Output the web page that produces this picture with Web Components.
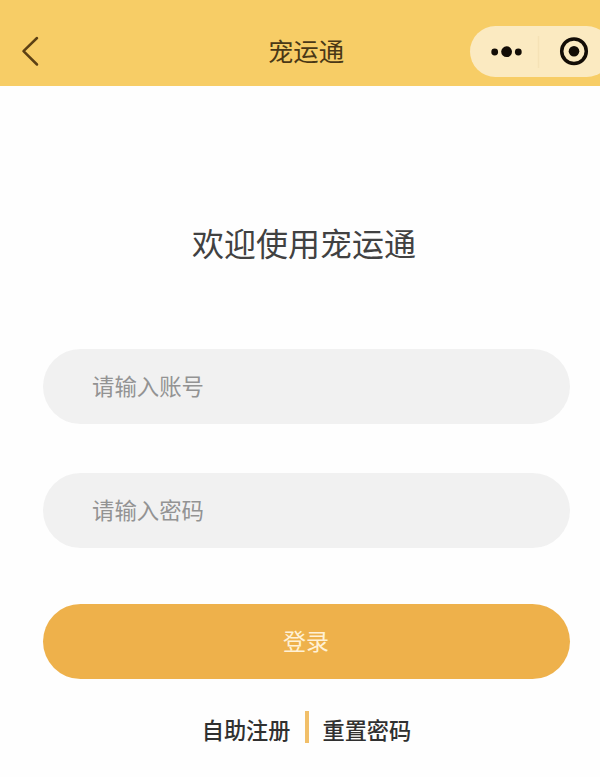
<!DOCTYPE html>
<html lang="zh-CN">
<head>
<meta charset="UTF-8">
<meta name="viewport" content="width=device-width, initial-scale=1">
<title>宠运通</title>
<style>
  body {
    margin: 0;
    background: #fefefe;
    font-family: "Noto Sans CJK SC", sans-serif;
    overflow: hidden;
  }
</style>
</head>
<body>
<login-page></login-page>

<script>
class CapsuleMenu extends HTMLElement {
  constructor() {
    super();
    this.attachShadow({ mode: "open" });
  }

  static get styles() {
    return /* css */`
      :host {
        display: block;
        width: 142px;
        height: 51px;
        border-radius: 26px;
        background: #fbeac1;
      }

      svg {
        display: block;
      }
    `;
  }

  connectedCallback() {
    this.shadowRoot.innerHTML = /* html */`
    <style>${CapsuleMenu.styles}</style>
    <svg width="142" height="51" viewBox="0 0 142 51" fill="#130d06">
      <circle cx="24.7" cy="26" r="3.4" />
      <circle cx="36.6" cy="25.7" r="5.4" />
      <circle cx="48.3" cy="26" r="3.4" />
      <path d="M68.5 10v32" stroke="#f5e2b6" stroke-width="1.5" />
      <circle cx="104" cy="25.3" r="12.3" fill="none" stroke="#130d06" stroke-width="3.5" />
      <circle cx="104" cy="25.3" r="5.3" />
    </svg>`;
  }
}

class NavBar extends HTMLElement {
  constructor() {
    super();
    this.attachShadow({ mode: "open" });
  }

  static get styles() {
    return /* css */`
      :host {
        display: grid;
        grid-template-columns: 142px 1fr 130px;
        align-items: center;
        box-sizing: border-box;
        height: 86px;
        padding-top: 17px;
        background: #f7cd66;
      }

      .back {
        display: block;
        margin-left: 17px;
        margin-bottom: 1px;
      }

      .title {
        margin-bottom: 3px;
        font-size: 25.4px;
        line-height: 36px;
        color: #4a3816;
        text-align: center;
      }
    `;
  }

  connectedCallback() {
    this.shadowRoot.innerHTML = /* html */`
    <style>${NavBar.styles}</style>
    <svg class="back" width="24" height="34" viewBox="0 0 24 34" fill="none">
      <path d="M20 4 6.500 17.200 20 30.500" stroke="#5c4014" stroke-width="2.500" stroke-linecap="round" stroke-linejoin="round" />
    </svg>
    <div class="title"><slot></slot></div>
    <capsule-menu></capsule-menu>`;
  }
}

class TextField extends HTMLElement {
  constructor() {
    super();
    this.attachShadow({ mode: "open" });
  }

  static get styles() {
    return /* css */`
      :host {
        display: flex;
        align-items: center;
        box-sizing: border-box;
        height: 75px;
        padding: 0 49px 3px;
        border-radius: 38px;
        background: #f1f1f1;
        font-size: 22.4px;
        line-height: 32px;
        color: #939393;
      }
    `;
  }

  connectedCallback() {
    this.shadowRoot.innerHTML = /* html */`
    <style>${TextField.styles}</style>
    <span><slot></slot></span>`;
  }
}

class SubmitButton extends HTMLElement {
  constructor() {
    super();
    this.attachShadow({ mode: "open" });
  }

  static get styles() {
    return /* css */`
      :host {
        display: block;
      }

      button {
        display: block;
        width: 100%;
        height: 75px;
        padding: 0 1px 4px 0;
        border: 0;
        border-radius: 38px;
        background: #eeb14b;
        font-family: inherit;
        font-size: 23px;
        line-height: 34px;
        color: #fff1d6;
      }
    `;
  }

  connectedCallback() {
    this.shadowRoot.innerHTML = /* html */`
    <style>${SubmitButton.styles}</style>
    <button type="button"><slot></slot></button>`;
  }
}

class AccountLinks extends HTMLElement {
  constructor() {
    super();
    this.attachShadow({ mode: "open" });
  }

  static get styles() {
    return /* css */`
      :host {
        display: flex;
        justify-content: center;
        align-items: center;
        gap: 14px;
        font-size: 22.2px;
        font-weight: 500;
        line-height: 32px;
        color: #303030;
      }

      ::slotted(span) {
        margin-bottom: 2px;
      }

      .divider {
        width: 4px;
        height: 32px;
        margin-bottom: 6px;
        background: #f1bf69;
      }
    `;
  }

  connectedCallback() {
    this.shadowRoot.innerHTML = /* html */`
    <style>${AccountLinks.styles}</style>
    <slot name="register"></slot>
    <div class="divider"></div>
    <slot name="reset"></slot>`;
  }
}

class LoginPage extends HTMLElement {
  constructor() {
    super();
    this.attachShadow({ mode: "open" });
  }

  static get styles() {
    return /* css */`
      :host {
        display: block;
        width: 600px;
        height: 777px;
        overflow: hidden;
      }

      main {
        display: flex;
        flex-direction: column;
        padding: 0 30px 0 43px;
      }

      h1 {
        margin: 132px 5px 83px 0;
        font-size: 32px;
        font-weight: 400;
        line-height: 48px;
        color: #414141;
        text-align: center;
      }

      text-field + text-field {
        margin-top: 49px;
      }

      submit-button {
        margin-top: 56px;
      }

      account-links {
        margin-top: 32px;
      }
    `;
  }

  connectedCallback() {
    this.shadowRoot.innerHTML = /* html */`
    <style>${LoginPage.styles}</style>
    <nav-bar>宠运通</nav-bar>
    <main>
      <h1>欢迎使用宠运通</h1>
      <text-field>请输入账号</text-field>
      <text-field>请输入密码</text-field>
      <submit-button>登录</submit-button>
      <account-links>
        <span slot="register">自助注册</span>
        <span slot="reset">重置密码</span>
      </account-links>
    </main>`;
  }
}

customElements.define("capsule-menu", CapsuleMenu);
customElements.define("nav-bar", NavBar);
customElements.define("text-field", TextField);
customElements.define("submit-button", SubmitButton);
customElements.define("account-links", AccountLinks);
customElements.define("login-page", LoginPage);
</script>
</body>
</html>
